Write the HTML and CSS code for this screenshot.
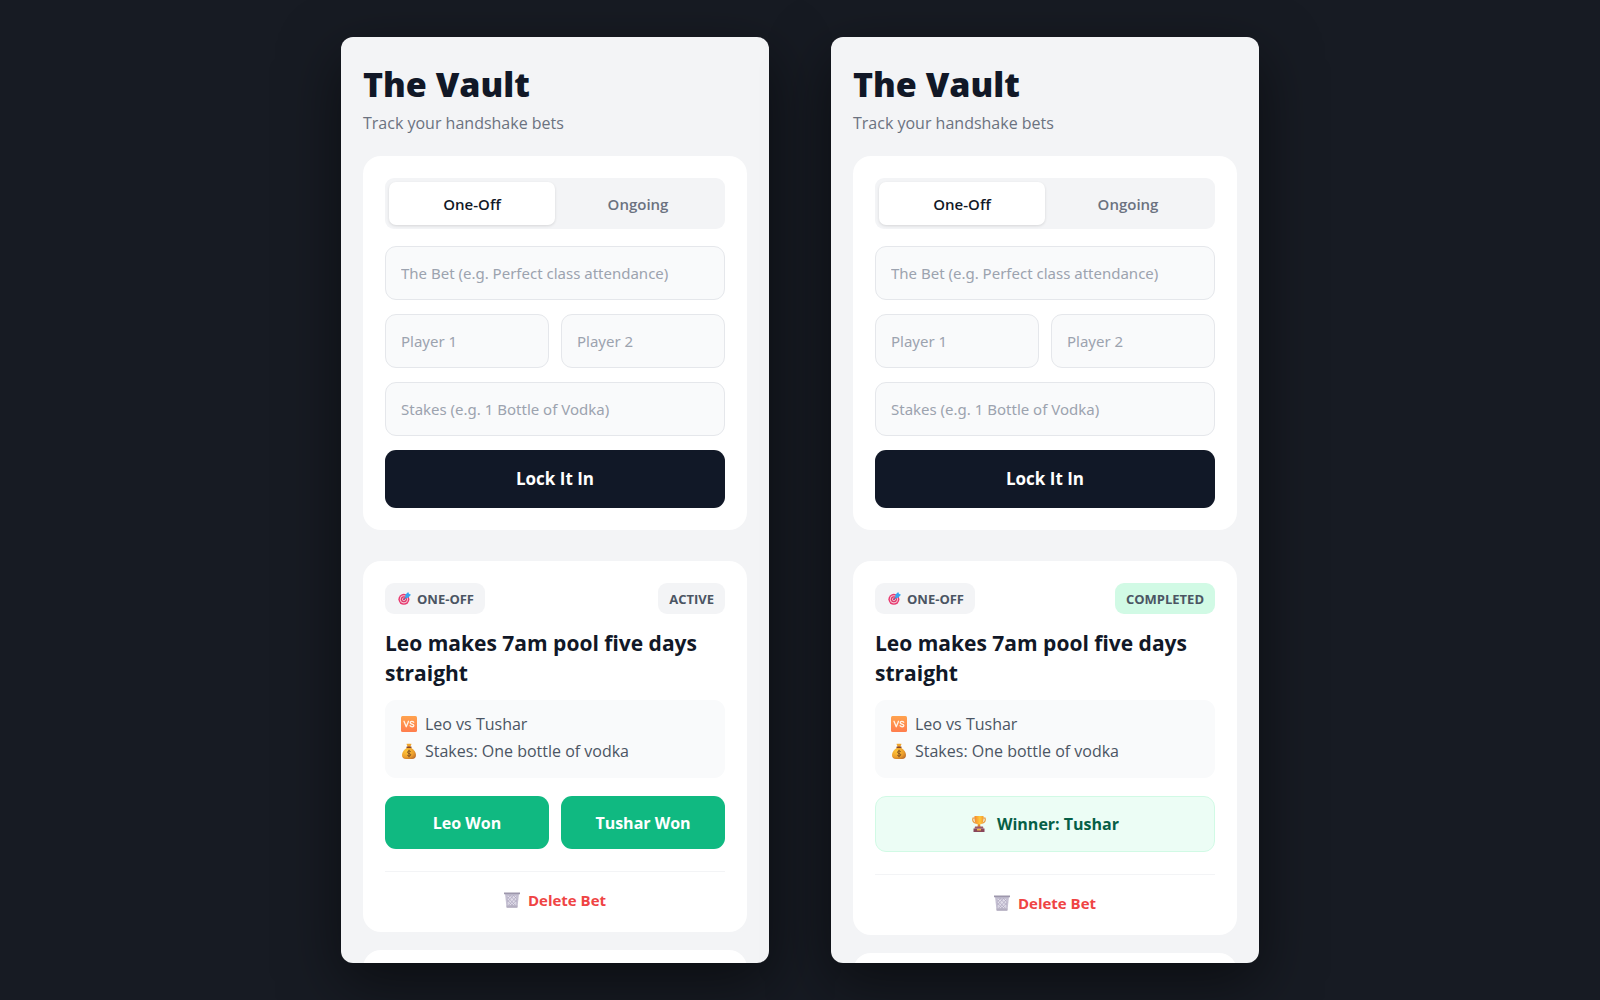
FILE: index.html
```html
<!DOCTYPE html>
<html lang="en">
<head>
<meta charset="utf-8">
<meta name="viewport" content="width=device-width, initial-scale=1">
<title>The Vault</title>
<link rel="stylesheet" href="styles.css">
</head>
<body>
<svg class="sprite" aria-hidden="true">
  <defs>
    <linearGradient id="vs-fill" x1="0" y1="0" x2="0" y2="1"><stop offset="0" stop-color="#ffa24e"/><stop offset="1" stop-color="#ff7d4d"/></linearGradient>
    <radialGradient id="bag-fill" cx=".35" cy=".35" r=".8"><stop offset="0" stop-color="#ffc53a"/><stop offset=".6" stop-color="#eda02c"/><stop offset="1" stop-color="#b96a2c"/></radialGradient>
    <linearGradient id="cup-fill" x1="0" y1="0" x2="1" y2="0"><stop offset="0" stop-color="#f58a2c"/><stop offset=".6" stop-color="#ffc83d"/><stop offset="1" stop-color="#f59a2c"/></linearGradient>
    <symbol id="target" viewBox="0 0 32 32">
      <circle cx="14.500" cy="18" r="13.500" fill="#e8386f"/>
      <circle cx="14.500" cy="18" r="10" fill="#f3c3d3"/>
      <circle cx="14.500" cy="18" r="7.500" fill="#dd3565"/>
      <circle cx="14.500" cy="18" r="4.500" fill="#f3c3d3"/>
      <circle cx="14.500" cy="18" r="2.500" fill="#dd3565"/>
      <path d="M14.500 18 23 9.500" stroke="#3f6fb5" stroke-width="2.500"/>
      <path d="M18 7 25 0l2 4.500 5 2L25 14l-7 .5z" fill="#36a5ee"/>
    </symbol>
    <symbol id="versus" viewBox="0 0 32 32">
      <rect width="32" height="32" rx="3" fill="url(#vs-fill)"/>
      <path d="M6 10.500 10.500 21.500 15 10.500M25.500 12.500c-1.500-2.500-7-2.500-7 .8 0 3.400 7.200 2 7.200 5.500 0 3.600-6 3.400-7.700.6" fill="none" stroke="#fff3e8" stroke-width="2.600" stroke-linecap="round" stroke-linejoin="round"/>
    </symbol>
    <symbol id="bag" viewBox="0 0 32 32">
      <path d="M11 2c2-1 3 1 5-1 2 2 3 0 5 1l-2.500 6h-5z" fill="#f0a52d"/>
      <path d="M12.500 9h7C26 13 30 19 30 24c0 5-3 8-8 8H10c-5 0-8-3-8-8 0-5 4-11 10.500-15z" fill="url(#bag-fill)"/>
      <path d="M12 8.500h8" stroke="#87462b" stroke-width="2.600" stroke-linecap="round"/>
      <path d="M19.500 17.500c-1.500-2.500-6.500-2-6.500 1 0 3.200 6.500 1.800 6.500 5 0 3-5.500 3.500-7 .8M16 13.500v15" fill="none" stroke="#7a4a1f" stroke-width="1.800"/>
    </symbol>
    <symbol id="trophy" viewBox="0 0 32 32">
      <path d="M9 4H4c-2 6 1 10 7 10.500M23 4h5c2 6-1 10-7 10.500" fill="none" stroke="#e8963a" stroke-width="2.400"/>
      <path d="M14 15h4l1 7h-6z" fill="#e28a2f"/>
      <path d="M7 0h18v7c0 6-3 10-9 10S7 13 7 7z" fill="url(#cup-fill)"/>
      <path d="M8 21h16l1 4H7z" fill="#9c5866"/>
      <path d="M5 25h22v7H5z" fill="#88465a"/>
      <rect x="12" y="25.500" width="8" height="3.500" rx="1" fill="#f5b549"/>
    </symbol>
    <symbol id="bin" viewBox="0 0 32 32">
      <path d="M2 3h28l-3 28H5z" fill="#c5c0d2"/>
      <path d="M7 8h18l-2 18H9z" fill="#e0dde9"/>
      <path d="M6 9l16 17M12 7l13 13M19 7l6 6M25 9 10 26M19 7 7 20M13 7l-6 6M6 15l11 12M26 15 15 27" stroke="#aaa4bb" stroke-width="1.400"/>
      <path d="M5 27h22l-.5 4.500h-21z" fill="#b3aec0"/>
      <path d="M0 1h32v3.500H0z" fill="#9d97ac"/>
    </symbol>
  </defs>
</svg>

<main class="stage">
  <section class="phone" aria-label="Active bet">
    <header class="masthead">
      <h1 class="masthead-title">The Vault</h1>
      <p class="masthead-sub">Track your handshake bets</p>
    </header>

    <form class="card bet-form">
      <div class="segment">
        <button type="button" class="segment-item is-selected" aria-pressed="true">One-Off</button>
        <button type="button" class="segment-item" aria-pressed="false">Ongoing</button>
      </div>
      <input class="field" type="text" aria-label="The bet" placeholder="The Bet (e.g. Perfect class attendance)">
      <div class="pair">
        <input class="field" type="text" aria-label="Player 1" placeholder="Player 1">
        <input class="field" type="text" aria-label="Player 2" placeholder="Player 2">
      </div>
      <input class="field" type="text" aria-label="Stakes" placeholder="Stakes (e.g. 1 Bottle of Vodka)">
      <button type="button" class="submit">Lock It In</button>
    </form>

    <div class="bets">
      <article class="card">
        <div class="badges">
          <span class="badge"><svg class="icon icon-small"><use href="#target"/></svg>ONE-OFF</span>
          <span class="badge">ACTIVE</span>
        </div>
        <h2 class="bet-title">Leo makes 7am pool five days straight</h2>
        <div class="details">
          <p class="detail"><svg class="icon"><use href="#versus"/></svg>Leo vs Tushar</p>
          <p class="detail"><svg class="icon"><use href="#bag"/></svg>Stakes: One bottle of vodka</p>
        </div>
        <div class="pair">
          <button type="button" class="win">Leo Won</button>
          <button type="button" class="win">Tushar Won</button>
        </div>
        <div class="card-foot">
          <button type="button" class="delete"><svg class="icon"><use href="#bin"/></svg>Delete Bet</button>
        </div>
      </article>
      <article class="card card-next"></article>
    </div>
  </section>

  <section class="phone" aria-label="Completed bet">
    <header class="masthead">
      <h1 class="masthead-title">The Vault</h1>
      <p class="masthead-sub">Track your handshake bets</p>
    </header>

    <form class="card bet-form">
      <div class="segment">
        <button type="button" class="segment-item is-selected" aria-pressed="true">One-Off</button>
        <button type="button" class="segment-item" aria-pressed="false">Ongoing</button>
      </div>
      <input class="field" type="text" aria-label="The bet" placeholder="The Bet (e.g. Perfect class attendance)">
      <div class="pair">
        <input class="field" type="text" aria-label="Player 1" placeholder="Player 1">
        <input class="field" type="text" aria-label="Player 2" placeholder="Player 2">
      </div>
      <input class="field" type="text" aria-label="Stakes" placeholder="Stakes (e.g. 1 Bottle of Vodka)">
      <button type="button" class="submit">Lock It In</button>
    </form>

    <div class="bets">
      <article class="card">
        <div class="badges">
          <span class="badge"><svg class="icon icon-small"><use href="#target"/></svg>ONE-OFF</span>
          <span class="badge badge-done">COMPLETED</span>
        </div>
        <h2 class="bet-title">Leo makes 7am pool five days straight</h2>
        <div class="details">
          <p class="detail"><svg class="icon"><use href="#versus"/></svg>Leo vs Tushar</p>
          <p class="detail"><svg class="icon"><use href="#bag"/></svg>Stakes: One bottle of vodka</p>
        </div>
        <p class="winner"><svg class="icon"><use href="#trophy"/></svg>Winner: Tushar</p>
        <div class="card-foot">
          <button type="button" class="delete"><svg class="icon"><use href="#bin"/></svg>Delete Bet</button>
        </div>
      </article>
      <article class="card card-next"></article>
    </div>
  </section>
</main>
</body>
</html>
```
FILE: styles.css
```css
:root {
  --ink: #111827;
  --text: #4b5563;
  --muted: #6b7280;
  --faint: #9ca3af;
  --line: #e5e7eb;
  --ground: #f3f4f6;
  --soft: #f9fafb;
}

* {
  box-sizing: border-box;
}

body {
  margin: 0;
  background: #171b23;
  color: var(--ink);
  font: 400 16px/24px "Open Sans", "Noto Sans", sans-serif;
}

h1,
h2,
p {
  margin: 0;
}

button,
input {
  border: 0;
  padding: 0;
  font: inherit;
}

button {
  cursor: pointer;
}

.sprite {
  display: block;
  width: 0;
  height: 0;
}

.stage {
  display: flex;
  justify-content: center;
  gap: 62px;
  height: 100vh;
  padding: 37px 24px;
}

.phone {
  flex: 1;
  max-width: 428px;
  overflow: hidden;
  padding: 24px 22px 0;
  border-radius: 12px;
  background: var(--ground);
  box-shadow: 0 20px 60px rgba(0, 0, 0, 0.5);
}

.masthead {
  margin-bottom: 17px;
}

.masthead-title {
  font-size: 34px;
  font-weight: 800;
  line-height: 46px;
}

.masthead-sub {
  color: var(--muted);
  line-height: 32px;
}

.card {
  padding: 22px;
  border-radius: 18px;
  background: #fff;
}

.bet-form {
  display: flex;
  flex-direction: column;
  gap: 14px;
  margin-bottom: 31px;
}

.segment {
  display: flex;
  margin-bottom: 3px;
  padding: 4px;
  border-radius: 9px;
  background: var(--ground);
}

.segment-item {
  flex: 1;
  height: 43px;
  border-radius: 7px;
  background: none;
  color: var(--muted);
  font-size: 15px;
  font-weight: 600;
}

.segment-item.is-selected {
  background: #fff;
  color: var(--ink);
  box-shadow: 0 1px 3px rgba(0, 0, 0, 0.12);
}

.pair {
  display: grid;
  grid-template-columns: 1fr 1fr;
  gap: 12px;
}

.field {
  width: 100%;
  height: 54px;
  padding: 0 15px;
  border: 1px solid var(--line);
  border-radius: 11px;
  background: var(--soft);
  color: var(--ink);
  font-family: "Noto Sans", sans-serif;
  font-size: 15px;
}

.field::placeholder {
  color: var(--faint);
  opacity: 1;
}

.submit {
  height: 58px;
  border-radius: 11px;
  background: var(--ink);
  color: #fff;
  font-size: 17px;
  font-weight: 700;
}

.bets {
  display: flex;
  flex-direction: column;
  gap: 18px;
}

.badges {
  display: flex;
  justify-content: space-between;
}

.badge {
  display: flex;
  align-items: center;
  gap: 6px;
  height: 31px;
  padding: 0 11px;
  border-radius: 9px;
  background: var(--ground);
  color: var(--text);
  font-size: 13px;
  font-weight: 700;
}

.badge-done {
  background: #d1fae5;
}

.icon {
  flex: none;
  width: 16px;
  height: 16px;
}

.icon-small {
  width: 13px;
  height: 13px;
  margin-left: 2px;
}

.bet-title {
  margin: 14px 0 12px;
  font-size: 21px;
  font-weight: 700;
  line-height: 30px;
}

.details {
  margin-bottom: 18px;
  padding: 12px 16px;
  border-radius: 11px;
  background: var(--soft);
}

.detail {
  display: flex;
  align-items: center;
  gap: 8px;
  margin-bottom: 3px;
  color: var(--text);
  font-weight: 500;
}

.win {
  height: 53px;
  border-radius: 11px;
  background: #10b981;
  color: #fff;
  font-weight: 700;
}

.winner {
  display: flex;
  align-items: center;
  justify-content: center;
  gap: 10px;
  height: 56px;
  border: 1px solid #d1fae5;
  border-radius: 11px;
  background: #ecfdf5;
  color: #065f46;
  font-weight: 700;
}

.card-foot {
  margin-top: 22px;
  padding-top: 18px;
  border-top: 1px solid var(--ground);
}

.delete {
  display: flex;
  align-items: center;
  justify-content: center;
  gap: 8px;
  width: 100%;
  background: none;
  color: #ef4444;
  font-size: 15px;
  font-weight: 700;
  line-height: 20px;
}

.card-next {
  min-height: 240px;
}
```
